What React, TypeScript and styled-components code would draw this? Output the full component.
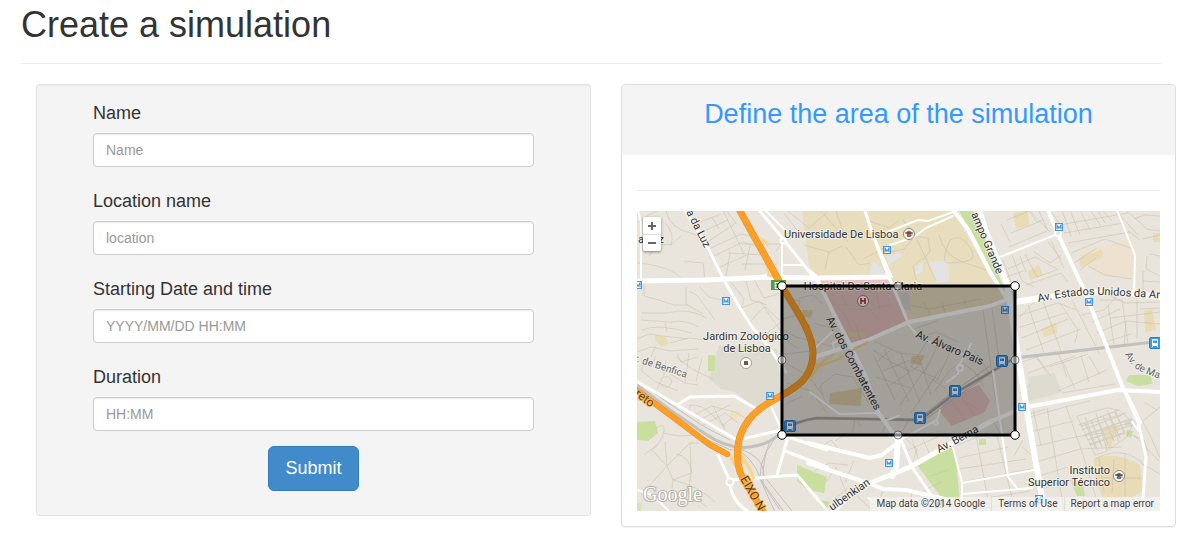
import React from 'react';
import styled, { createGlobalStyle } from 'styled-components';

const GlobalStyle = createGlobalStyle`
  *, *::before, *::after { box-sizing: border-box; }
  body {
    margin: 0;
    background: #fff;
    color: #333;
    font: 14px/20px "Liberation Sans", Arial, sans-serif;
  }
`;

const Page = styled.main`
  padding: 5px 25px 24px 21px;
`;

const PageHeader = styled.header`
  margin: 0 15px 20px 0;
  padding-bottom: 18px;
  border-bottom: 1px solid #eee;
`;

const PageTitle = styled.h1`
  margin: 0;
  font-size: 36px;
  line-height: 40px;
  font-weight: 400;
`;

const Columns = styled.div`
  display: grid;
  grid-template-columns: minmax(0, 1fr) minmax(0, 1fr);
  gap: 30px;
  align-items: start;
  padding-left: 15px;
`;

const FormCard = styled.form`
  display: flex;
  flex-direction: column;
  gap: 24px;
  padding: 18px 56px 24px;
  background: #f4f4f4;
  border: 1px solid #e3e3e3;
  border-radius: 3px;
  box-shadow: inset 0 1px 1px rgba(0, 0, 0, 0.05);
`;

const Field = styled.div`
  display: flex;
  flex-direction: column;
  gap: 10px;
`;

const Label = styled.label`
  font-size: 18px;
  line-height: 20px;
`;

const TextInput = styled.input`
  width: 100%;
  height: 34px;
  padding: 6px 12px;
  border: 1px solid #ccc;
  border-radius: 4px;
  background: #fff;
  box-shadow: inset 0 1px 1px rgba(0, 0, 0, 0.075);
  color: #555;
  font: inherit;
  &::placeholder { color: #999; opacity: 1; }
`;

const SubmitButton = styled.button`
  align-self: center;
  height: 45px;
  margin-top: -9px;
  padding: 0 16px 2px;
  border: 1px solid #357ebd;
  border-radius: 6px;
  background: #428bca;
  color: #fff;
  font: 18px/24px "Liberation Sans", Arial, sans-serif;
  cursor: pointer;
`;

const Panel = styled.section`
  border: 1px solid #ddd;
  border-radius: 4px;
  box-shadow: 0 1px 1px rgba(0, 0, 0, 0.05);
  overflow: hidden;
`;

const PanelHeading = styled.div`
  padding: 14px 15px 26px;
  background: #f4f4f4;
  text-align: center;
`;

const PanelTitle = styled.h2`
  margin: 0;
  color: #39f;
  font-size: 27px;
  line-height: 30px;
  font-weight: 400;
`;

const PanelBody = styled.div`
  padding: 15px;
`;

const Divider = styled.hr`
  margin: 20px 0;
  border: 0;
  border-top: 1px solid #eee;
`;

const MapFrame = styled.div`
  position: relative;
  height: 300px;
  overflow: hidden;
  background: #e9e5dc;
  font-family: Roboto, sans-serif;
`;

const MapCanvas = styled.svg`
  display: block;
  width: 100%;
  height: 100%;
`;

const ZoomControl = styled.div`
  position: absolute;
  top: 6px;
  left: 6px;
  display: flex;
  flex-direction: column;
  width: 18px;
  border-radius: 2px;
  background: #fff;
  box-shadow: 0 1px 3px rgba(0, 0, 0, 0.45);
`;

const ZoomButton = styled.button`
  display: flex;
  align-items: center;
  justify-content: center;
  height: 17px;
  padding: 0;
  border: 0;
  background: none;
  cursor: pointer;
  & + & { border-top: 1px solid #ddd; }
`;

const Attribution = styled.div`
  position: absolute;
  right: 0;
  bottom: 0;
  display: flex;
  height: 14px;
  background: rgba(245, 245, 245, 0.7);
  color: #444;
  font-size: 10px;
  line-height: 14px;
  white-space: nowrap;
`;

const AttributionItem = styled.span`
  padding: 0 6px;
  & + & { border-left: 1px solid #e0ddd6; }
`;

const AttributionLink = styled.a`
  color: inherit;
  text-decoration: none;
`;

const MapLabel = styled.text<{ $size?: number; $color?: string; $halo?: string }>`
  font-family: Roboto, sans-serif;
  font-size: ${(p) => p.$size ?? 11}px;
  fill: ${(p) => p.$color ?? '#333'};
  stroke: ${(p) => p.$halo ?? '#f5f3ee'};
  stroke-width: 2px;
  stroke-linejoin: round;
  stroke-opacity: 0.8;
  paint-order: stroke;
`;

const Logo = styled.text`
  font-family: "Liberation Serif", serif;
  font-size: 20px;
  fill: #fff;
  stroke: #b5b1a9;
  stroke-width: 2px;
  stroke-linejoin: round;
  paint-order: stroke;
`;

const fields = [
  { id: 'name', label: 'Name', placeholder: 'Name' },
  { id: 'location', label: 'Location name', placeholder: 'location' },
  { id: 'start', label: 'Starting Date and time', placeholder: 'YYYY/MM/DD HH:MM' },
  { id: 'duration', label: 'Duration', placeholder: 'HH:MM' },
];

const areas: [string, string][] = [
  ['#e8ddbd', 'M165 0H316L368 91 270 111 253 65 177 66 172 54Z'],
  ['#c8dfa0', 'M322 0H336L348 27 361 62 369 84 363 82 349 47Z'],
  ['#e6c3c2', 'M180 69 253 67 270 109 230 128Q214 136 207 127L186 85Z'],
  ['#dedbd0', 'M82 134 140 138 145 186 119 197 98 181 84 178 72 168Z'],
  ['#dedbd0', 'M392 166 417 162 425 181 390 191Z'],
  ['#ede1cf', 'M441 41 497 28V68L459 64Z'],
  ['#e8dbb5', 'M442 47 465 39 466 46 444 57Z'],
  ['#e8dbb5', 'M376 2 391 -1 392 14 379 18Z'],
  ['#e8dbb5', 'M391 60 402 54 406 64 393 69Z'],
  ['#e8dbb5', 'M404 118 419 111 420 122 407 126Z'],
  ['#e8dbb5', 'M507 100 515 98 519 119 508 121Z'],
  ['#e8dbb5', 'M516 22H523V31H516Z'],
  ['#e8dbb5', 'M18 124 29 126 32 133 24 135 18 129Z'],
  ['#f0dfbf', 'M94 199 103 200 104 206 93 209Z'],
  ['#dfcfa8', 'M193 182 225 177 224 195 192 193Z'],
  ['#dfcfa8', 'M165 99H176L174 107 166 106Z'],
  ['#dfcfa8', 'M275 145 288 144 283 154 273 152Z'],
  ['#e0d0a3', 'M210 120 230 122 227 127 212 126Z'],
  ['#e6c3c2', 'M312 187 342 174 353 190 348 201 315 215 302 200Z'],
  ['#e4e3e3', 'M232 63 236 50 245 56 247 64Z'],
  ['#e4e3e3', 'M292 51 311 50 312 70 299 72Z'],
  ['#e4e3e3', 'M278 56 286 52 286 60 279 64Z'],
  ['#e4e3e3', 'M249 45 264 42 264 46 251 54Z'],
  ['#d4d4d4', 'M263 82 272 81 274 100 265 97Z'],
  ['#c8dfa0', 'M280 254 315 236 319 250 323 291H308Z'],
  ['#c8dfa0', 'M342 228H349V234H342Z'],
  ['#c8dfa0', 'M0 211 18 210 21 222 11 230 0 229Z'],
  ['#c8dfa0', 'M71 144H78V160H71Z'],
  ['#c8dfa0', 'M160 254 177 261 190 266 187 282 171 279 160 270Z'],
  ['#c8dfa0', 'M183 289 193 291 190 297 182 293Z'],
  ['#c8dfa0', 'M492 164 514 164 515 173 501 175 489 170Z'],
  ['#c8dfa0', 'M490 219 496 220 494 227 489 224Z'],
  ['#c8dfa0', 'M434 270 446 273 448 285 440 285Z'],
  ['#cfe4c0', 'M0 292H5L4 300H0Z'],
  ['#e8dbb5', 'M457 247Q480 240 503 254L506 280 492 288H466L457 262Z'],
  ['#e8dbb5', 'M464 218 479 213 484 217 477 224 474 237 468 235 469 226Z'],
  ['#d8d5cf', 'M487 209 495 207 496 215 489 217Z'],
];

const minorStreets = [
  // north-west
  'M0 12Q12 2 24 -1M29 0Q33 18 54 22 69 26 72 42L87 69M12 45 22 33 34 34 44 25M28 12Q38 22 34 34',
  'M58 13 84 3M63 22 91 9M69 32 99 12 88 -2M72 38 104 23M75 46 106 31 117 35M81 57 112 43M75 6 82 18M86 -1 107 43M93 42 89 65M104 23Q118 24 124 37',
  'M0 52Q21 53 38 62L45 68M47 50 66 52 68 69M7 73V85L22 89 37 94 51 94M49 76V93L66 103M52 80 60 84 78 109M62 75 72 86 94 91M93 70 107 88 103 100M109 70 114 89 130 94M117 68 127 87 145 82M102 98 122 90 142 109M112 112 127 96 145 122M124 127 144 111',
  'M4 102H30Q50 96 70 107M4 109 34 111Q48 108 62 116M5 119Q20 112 55 122M0 128 12 123 26 125 51 128M33 132 52 127 71 129M0 141 14 136 33 140 62 138M14 146 19 134M40 143 44 151 61 146M30 120 28 112',
  'M104 33H145M91 42 125 44M105 53 140 53M113 35 108 59M147 2 160 19M151 0 173 18M147 30 139 40',
  // west
  'M18 145 16 156 30 161 48 172 61 174M10 146 4 159 17 170 41 180M29 149 27 164 20 178M39 146 55 158 76 168M52 142 48 172M65 147 59 170M0 187 20 190M23 168Q32 162 35 171 31 180 24 174',
  'M53 194Q65 193 75 204L88 216M57 204 75 195 98 201 110 208M60 210 93 194M65 215 88 202 101 212M53 194Q49 202 62 207M85 215 95 207M76 195 88 219',
  'M18 218Q28 210 27 220T15 239L30 255 53 232 62 232M26 222 42 225 60 224M30 255 36 269 54 262M28 231 30 255 14 273 3 283M36 269 34 286 23 288M53 232 54 263 51 282 70 296M39 243Q53 245 55 262M20 234 7 244M36 269Q60 274 78 291',
  // university
  'M173 16 190 1M184 0 211 31M199 0 205 18 214 27M167 34 192 41 206 35M192 41 188 58M209 36 222 54 233 52M245 43 267 38 278 25 291 27 293 40 286 49M302 24Q307 45 328 52T350 59M265 8 278 24 299 70M313 29Q323 22 332 35T330 50 311 52 313 29M230 9 252 17 262 9M286 47 276 55 279 69M226 48 249 36',
  // inside the selected area
  'M148 87 163 90 160 104 145 108M162 87 176 84 185 92M161 110 173 114 170 129M147 119 159 126 170 129M177 112 197 118M180 131 205 139M146 143 176 140M145 126 161 138M190 84 208 104 216 122M189 94H228L243 110M205 84 212 98 237 99M230 86 238 97 254 94M219 113 224 132M240 83 243 99',
  'M273 94 292 98 344 88M286 91 295 107M305 91 309 106M327 89 333 102M345 92 352 142 359 192M354 90 363 155M275 119 300 110M237 130 262 142 281 144M236 139 254 151 273 160M241 150 257 136M246 160 273 149M253 174 286 152M263 194 293 151M274 202 304 157M237 145 258 189M247 138 272 190M263 140 283 192M281 143 294 184M293 125 274 156 301 168M303 129 287 163M316 134 300 170M292 166 309 178M239 166 274 177M286 126 299 121 321 131',
  'M190 197 183 175 198 163 216 166 232 193M175 164 190 145M150 153 171 165 186 184M150 172 174 180 190 202M149 193 165 185M223 215 221 207M215 223 218 209M245 222 250 212M264 222 272 209M325 140 344 148 354 166M324 151 337 160 347 176M298 180 312 160 321 153M328 191 340 197M314 190 329 209M322 184 338 204',
  // south
  'M178 260 192 252 211 254M190 270 199 256 209 281M196 289 210 278M217 249 208 272M181 238 194 229 204 241M198 230 206 225M267 226 280 238 276 251M286 228 293 244M271 239 294 229 302 225M320 234 352 222M322 247 371 236M322 258 389 248M326 271 394 258M339 225 353 299M360 225 378 299M330 290 394 280M339 299 395 289M275 228 282 250 300 241M293 265 312 259 M246 278 240 299M275 281 272 300M218 283 236 300M286 280 304 271',
  // north-east
  'M370 9 392 0 401 12M364 13 373 31M374 22 406 9M372 36 410 20M393 0 413 21M402 0 411 20M366 49 374 71M375 44 385 70 397 76M371 58 398 46 420 58M388 43 400 66 422 58M396 40 413 52 424 44M414 30 427 57M367 67 386 60M389 74 424 62 431 71M424 48 411 31M389 61 383 45',
  'M414 1 423 13M425 -1 434 25M433 -1 443 24M443 -1 453 19M453 -1 464 15M465 -1 475 10M422 14 491 2M427 22 487 12M431 32 493 21M434 42 468 28 496 38M437 52 460 37M451 55 468 64 495 68M443 59 459 47M461 0 468 12M481 2 501 24M489 -1 510 18 523 20M497 8 507 4 523 5M505 28 523 24M510 45 509 58 523 65M506 70 523 71M506 59V82M513 43 523 45M491 20 503 29',
  'M381 105 421 92 439 99M383 116 429 102M385 127 431 108M389 139 444 118M391 94 408 145M406 90 425 143M423 92 441 119 438 132M435 89 462 142M382 107 397 91M445 104 467 99 480 85M455 111 483 98M460 122 489 110 523 113M465 132 494 123M471 94 477 133M485 88 491 133M500 89V128M469 83 488 92 523 91M473 107 523 101M489 110 487 136M463 89H485M503 98 523 97',
  // south-east
  'M385 151 400 146 414 165M397 143 410 162M391 162 438 145M421 180 470 159M412 156 451 143M425 182 478 173M430 166 423 146 418 139M438 178 426 151M452 171 444 145M463 164 452 145M383 182 394 173M389 207 428 196 453 190M393 221 436 210M395 236 438 226 466 222M399 251 443 238 485 236M402 265 431 256M404 278 438 268M410 197 427 299M429 195 446 244 459 287M408 198 388 205M397 246 385 236M396 198 404 235M357 212 366 227M386 229 377 245',
  'M440 205 470 197 482 199 496 212 490 226 468 241 458 244 440 205M444 215 489 202M447 224 493 212M452 233 486 222M459 202 470 239M470 199 482 231M448 206 461 240M478 199 488 224M502 204 513 224 523 247M507 191 520 199M497 224 522 250M504 252 523 263M506 210 523 196M458 248Q483 234 505 251M462 247 467 281M488 244V285M466 267H505M477 248 475 282M494 224 507 229 512 244',
];

const gridBlocks = 'M442 214 482 199M445 219 485 204M447 224 488 210M450 229 489 216M453 234 488 222M448 211 459 238M454 209 465 236M460 207 471 233M466 205 477 230M472 203 483 227M478 201 488 222';

const whiteRoads: [number, string][] = [
  [5, 'M-1 70 68 69 130 66 180 67 252 66'],
  [2, 'M1 -1 4 12V67'],
  [3, 'M48 -1 72 39 87 69 103 97 115 116 129 132 149 161'],
  [3, 'M122 -1 147 29 174 63 180 70'],
  [2, 'M145 29V67M146 54H166L179 64M173 60 183 72'],
  [4, 'M180 68 197 103 213 134 228 164 241 201 262 231'],
  [2, 'M206 137Q196 143 196 132L205 128'],
  [3, 'M228 0 237 27 251 64 270 109'],
  [2, 'M235 22 255 66M248 22 281 9 291 10 316 1M253 34 277 26 289 17 316 5'],
  [4, 'M316 -1 331 18 353 61 372 91'],
  [6, 'M342 -1 348 18 370 73 381 144 393 218 408 304'],
  [4, 'M175 147 193 141 231 129 272 111 353 95 371 88'],
  [6, 'M378 91 403 87 440 82 472 80 525 86'],
  [2, 'M363 46 418 24'],
  [4, 'M411 -1 420 21 448 81 473 144 486 177'],
  [3, 'M486 177 501 211 509 246 505 301'],
  [2, 'M480 -1 498 44 497 80'],
  [2, 'M489 180 504 211 501 219 495 211'],
  [5, 'M193 303 217 281 233 272 273 256 353 211'],
  [4, 'M353 211 385 197 481 179 525 181'],
  [2, 'M173 142 196 120M173 181 202 203 239 202 247 210 262 205'],
  [2, 'M270 112 282 126 318 142 334 145M310 171 321 163 323 153 334 133'],
  [2, 'M261 230 300 209 303 199'],
  [4, 'M171 232 233 247 245 244 263 230'],
  [4, 'M171 252 234 273 246 278 269 279 320 291'],
  [6, 'M261 229 259 256 255 265'],
  [3, 'M265 231 275 256 307 303'],
  [2, 'M316 237 325 271V300M325 272 397 259M325 283 395 277M356 160 371 266 380 277'],
  [3, 'M-1 170 40 194 100 229 145 219M40 194 53 186 97 185 118 197'],
  [3, 'M145 222 154 227 190 239M148 240 190 256M151 226 140 264M93 269 160 264 190 299M81 244 92 268Q94 291 112 301'],
  [2, 'M0 279 15 284 31 299M231 287Q243 294 241 300M132 191 145 220M128 -1 148 19'],
];

const railway = 'M0 174 33 199 67 222Q91 239 113 236 133 234 147 219 159 210 180 207L283 209 320 181 378 147 525 130';

const metroStations = [[1, 74], [89, 90], [250, 39], [422, 16], [452, 91], [368, 99], [133, 185], [252, 252], [385, 196], [402, 288], [302, 293]];
const trainStations = [[518, 132], [365, 150], [318, 180], [283, 207], [153, 215]];
const corners = [[145, 75], [378, 75], [145, 224], [378, 224]];
const midpoints = [[261, 75], [145, 149], [378, 149], [261, 224]];

const motorway = 'M101 -4C118 28 133 53 146 77 162 104 176 123 176 143 175 181 136 182 116 204 94 227 98 260 111 275L128 304';
const spur = 'M-2 178 36 206 73 234 90 243';

function Metro({ x, y }: { x: number; y: number }) {
  return (
    <g transform={`translate(${x} ${y})`}>
      <rect x="-3.5" y="-3.5" width="7" height="7" fill="#fff" stroke="#4597e6" />
      <path d="M-2 2.5V-2L0 1.2 2-2V2.5" fill="none" stroke="#4597e6" strokeWidth="1.2" />
    </g>
  );
}

function Train({ x, y }: { x: number; y: number }) {
  return (
    <g transform={`translate(${x} ${y})`}>
      <rect x="-5.5" y="-5.5" width="11" height="11" rx="1.5" fill="#3f97ea" stroke="#2b7fd0" />
      <rect x="-3" y="-4" width="6" height="7" rx="1" fill="#fff" />
      <path d="M-2-2.5H2V0H-2ZM-2 1.5H-1M1 1.5H2" fill="#3f97ea" />
      <path d="M-2 3-3 4.5M2 3 3 4.5" stroke="#fff" />
    </g>
  );
}

function School({ x, y, color }: { x: number; y: number; color: string }) {
  return (
    <g transform={`translate(${x} ${y})`}>
      <circle r="5.5" fill="#fff" stroke="#8b8379" />
      <path d="M-4-1 0-3 4-1 0 1ZM-2 .8V2.2Q0 3.5 2 2.2V.8L0 1.8ZM3-1V2" fill={color} stroke={color} strokeWidth=".5" />
    </g>
  );
}

function CityMap() {
  return (
    <MapCanvas viewBox="0 0 523 300" preserveAspectRatio="xMidYMid slice" role="img" aria-label="Map of Lisboa with the selected area">
      <defs>
        <path id="unidos" d="M401 91Q440 83 465 84T530 88" />
        <path id="madrid" d="M488 143Q494 156 505 161T530 170" />
      </defs>
      <rect width="523" height="300" fill="#e9e5dc" />
      {areas.map(([fill, d], i) => <path key={i} d={d} fill={fill} />)}
      <g fill="none" stroke="#c5bda9" strokeOpacity=".5" strokeLinejoin="round">
        {minorStreets.map((d, i) => <path key={i} d={d} />)}
      </g>
      <path d={gridBlocks} stroke="#d3cec2" strokeWidth="1.2" />
      <g fill="none" stroke="#c2c1be">
        <path d={railway} strokeWidth="3" />
        <path d="M0 170 30 191 66 215 93 229M28 200 64 226 94 239 108 238M92 234Q116 244 124 269L147 301M97 237Q127 243 127 265L155 300M148 218Q122 240 123 268L138 301M134 228Q125 247 126 273L143 299" />
        <path d="M283 207 320 178 353 155M285 211 322 184 353 163" />
      </g>
      <path d="M147 219Q159 210 180 207L283 209 320 181 378 147" fill="none" stroke="#a5a4a3" strokeWidth="2" />
      <g fill="none" stroke="#fff" strokeLinejoin="round" strokeLinecap="round">
        {whiteRoads.map(([w, d], i) => <path key={i} d={d} strokeWidth={w} />)}
      </g>
      <g fill="#e9e5dc" stroke="#fff" strokeWidth="2">
        <circle cx="93" cy="271" r="3.5" />
        <circle cx="146" cy="30" r="2.5" />
        <circle cx="421" cy="22" r="3" />
        <circle cx="323" cy="157" r="3" />
        <circle cx="299" cy="212" r="2" />
      </g>
      <g fill="none" stroke="#f8d58e" strokeWidth="3">
        <path d="M118 199 139 188 154 177M123 199 145 187M91 242 103 262 116 270M97 238 112 256 117 268M105 244 112 258" />
        <path d="M174 164 183 155 202 148 212 141 231 131M169 157 185 152 197 143M170 168Q178 164 180 158L175 142M125 29 131 35M130 64 142 68" strokeWidth="2" />
        <path d="M124 27 130 31 125 33M129 53 132 63 143 71" strokeWidth="2" />
      </g>
      <g fill="none" strokeLinecap="round">
        <path d={motorway} stroke="#e59427" strokeWidth="7" />
        <path d={motorway} stroke="#fc9f28" strokeWidth="6" />
        <path d={spur} stroke="#e59427" strokeWidth="6" />
        <path d={spur} stroke="#fc9f28" strokeWidth="5" />
      </g>
      <rect x="134" y="69" width="15" height="10" fill="#5d9c3b" />
      <MapLabel x="137" y="78" $size={9} $color="#fff" $halo="#5d9c3b">E1</MapLabel>

      <MapLabel x="147" y="27">Universidade De Lisboa</MapLabel>
      <MapLabel x="226" y="79" textAnchor="middle">Hospital De Santa Maria</MapLabel>
      <MapLabel x="109" y="129" textAnchor="middle">Jardim Zoológico</MapLabel>
      <MapLabel x="110" y="141" textAnchor="middle">de Lisboa</MapLabel>
      <MapLabel x="473" y="263" textAnchor="end">Instituto</MapLabel>
      <MapLabel x="473" y="275" textAnchor="end">Superior Técnico</MapLabel>
      <MapLabel x="1" y="32">a Luz</MapLabel>
      <MapLabel transform="translate(49 1) rotate(63)">a da Luz</MapLabel>
      <MapLabel transform="translate(334 3) rotate(67)">ampo Grande</MapLabel>
      <MapLabel><textPath href="#unidos">Av. Estados Unidos da América</textPath></MapLabel>
      <MapLabel $size={10} $color="#666"><textPath href="#madrid">Av. de Madrid</textPath></MapLabel>
      <MapLabel transform="translate(189 108) rotate(62)">Av. dos Combatentes</MapLabel>
      <MapLabel transform="translate(278 126) rotate(23)">Av. Álvaro Pais</MapLabel>
      <MapLabel transform="translate(302 242) rotate(-28)">Av. Berna</MapLabel>
      <MapLabel transform="translate(195 300) rotate(-35)">ulbenkian</MapLabel>
      <MapLabel transform="translate(-3 150) rotate(18)" $size={10} $color="#666">r. de Benfica</MapLabel>
      <MapLabel transform="translate(-3 184) rotate(37)" $size={12} $color="#5c3a14" $halo="#fdb75d">reto</MapLabel>
      <MapLabel transform="translate(103 268) rotate(60)" $size={12} $color="#5c3a14" $halo="#fdb75d">EIXO N-S</MapLabel>

      {metroStations.map(([x, y]) => <Metro key={`${x}-${y}`} x={x} y={y} />)}
      {trainStations.map(([x, y]) => <Train key={`${x}-${y}`} x={x} y={y} />)}
      <School x={272} y={23} color="#7b4b33" />
      <School x={482} y={265} color="#555" />
      <circle cx="226" cy="90" r="5.5" fill="#fff" stroke="#8b8379" />
      <path d="M224 87V93M228 87V93M224 90H228" stroke="#c4202b" strokeWidth="1.6" />
      <circle cx="109" cy="152" r="5.5" fill="#fff" stroke="#a39c92" />
      <rect x="107" y="150" width="4" height="4" fill="#84502f" />

      <rect x="145" y="75" width="233" height="149" fill="#000" fillOpacity=".3" stroke="#000" strokeWidth="3" />
      {midpoints.map(([x, y]) => <circle key={`${x}-${y}`} cx={x} cy={y} r="4" fill="#fff" fillOpacity=".5" stroke="#000" strokeOpacity=".5" />)}
      {corners.map(([x, y]) => <circle key={`${x}-${y}`} cx={x} cy={y} r="4.3" fill="#fff" stroke="#000" />)}
      <Logo x="6" y="290">Google</Logo>
    </MapCanvas>
  );
}

export default function App() {
  return (
    <>
      <GlobalStyle />
      <Page>
        <PageHeader>
          <PageTitle>Create a simulation</PageTitle>
        </PageHeader>
        <Columns>
          <FormCard onSubmit={(e: React.FormEvent) => e.preventDefault()}>
            {fields.map((f) => (
              <Field key={f.id}>
                <Label htmlFor={f.id}>{f.label}</Label>
                <TextInput id={f.id} type="text" placeholder={f.placeholder} />
              </Field>
            ))}
            <SubmitButton type="submit">Submit</SubmitButton>
          </FormCard>
          <Panel>
            <PanelHeading>
              <PanelTitle>Define the area of the simulation</PanelTitle>
            </PanelHeading>
            <PanelBody>
              <Divider />
              <MapFrame>
                <CityMap />
                <ZoomControl>
                  <ZoomButton type="button" aria-label="Zoom in">
                    <svg width="8" height="8"><path d="M0 4H8M4 0V8" stroke="#666" strokeWidth="2" /></svg>
                  </ZoomButton>
                  <ZoomButton type="button" aria-label="Zoom out">
                    <svg width="8" height="8"><path d="M0 4H8" stroke="#666" strokeWidth="2" /></svg>
                  </ZoomButton>
                </ZoomControl>
                <Attribution>
                  <AttributionItem>Map data ©2014 Google</AttributionItem>
                  <AttributionItem><AttributionLink href="#terms">Terms of Use</AttributionLink></AttributionItem>
                  <AttributionItem><AttributionLink href="#report">Report a map error</AttributionLink></AttributionItem>
                </Attribution>
              </MapFrame>
            </PanelBody>
          </Panel>
        </Columns>
      </Page>
    </>
  );
}
